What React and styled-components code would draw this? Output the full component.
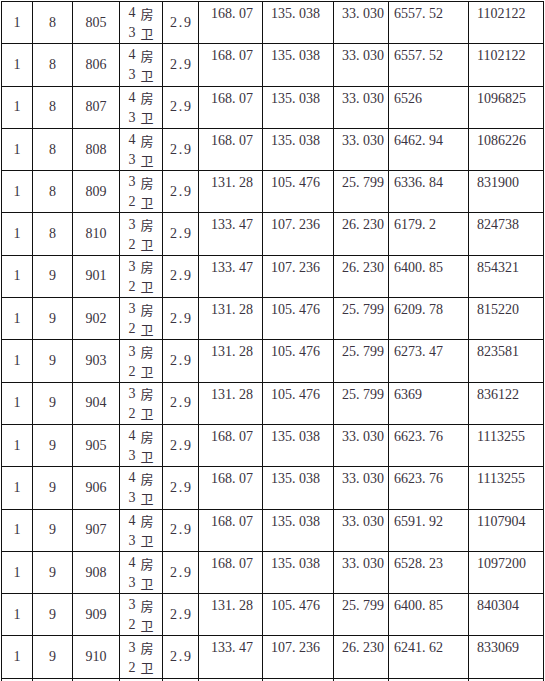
import React from 'react'
import styled, { createGlobalStyle } from 'styled-components';

const GlobalStyle = createGlobalStyle`
    html, body {
        margin: 0;
        padding: 0;
        background: #ffffff;
        overflow: hidden;
    }
    body {
        font-family: "Liberation Serif", "Noto Sans CJK SC", serif;
        font-size: 14px;
        color: #3a3340;
    }
`;

const Page = styled.div`
    padding: 1px 0 0 1px;
    height: 681px;
    overflow: hidden;
`;

const Table = styled.table`
    border-collapse: collapse;
    table-layout: fixed;
    width: 542px;
`;

const Row = styled.tr`
    height: 42.3px;
`;

const Cell = styled.td`
    border: 1px solid #111;
    padding: ${p => p.$top ? `2px 0 0 ${p.$pad || 0}px` : '0'};
    vertical-align: ${p => p.$top ? 'top' : 'middle'};
    text-align: ${p => p.$top ? 'left' : 'center'};
    line-height: 20px;
    white-space: nowrap;
    overflow: hidden;
`;

const Rooms = styled.div`
    display: flex;
    flex-direction: column;
    align-items: center;
    height: 41px;
    padding-top: 1px;
    box-sizing: border-box;
`;

const RoomLine = styled.div`
    height: 20px;
    line-height: 20px;
    display: flex;
    align-items: center;
`;

const Han = styled.span`
    font-family: "Noto Sans CJK SC", sans-serif;
    font-size: 13px;
    line-height: 1;
    margin-left: 5px;
`;

const Dot = styled.span`
    display: inline-block;
    width: 7px;
`;

const widths = [31, 40, 47, 43, 36, 64, 71, 55, 80, 75];
const pads = [12, 8, 8, 5, 8];

const rows = [
    [1, 8, 805, 4, 3, '168.07', '135.038', '33.030', '6557.52', '1102122'],
    [1, 8, 806, 4, 3, '168.07', '135.038', '33.030', '6557.52', '1102122'],
    [1, 8, 807, 4, 3, '168.07', '135.038', '33.030', '6526', '1096825'],
    [1, 8, 808, 4, 3, '168.07', '135.038', '33.030', '6462.94', '1086226'],
    [1, 8, 809, 3, 2, '131.28', '105.476', '25.799', '6336.84', '831900'],
    [1, 8, 810, 3, 2, '133.47', '107.236', '26.230', '6179.2', '824738'],
    [1, 9, 901, 3, 2, '133.47', '107.236', '26.230', '6400.85', '854321'],
    [1, 9, 902, 3, 2, '131.28', '105.476', '25.799', '6209.78', '815220'],
    [1, 9, 903, 3, 2, '131.28', '105.476', '25.799', '6273.47', '823581'],
    [1, 9, 904, 3, 2, '131.28', '105.476', '25.799', '6369', '836122'],
    [1, 9, 905, 4, 3, '168.07', '135.038', '33.030', '6623.76', '1113255'],
    [1, 9, 906, 4, 3, '168.07', '135.038', '33.030', '6623.76', '1113255'],
    [1, 9, 907, 4, 3, '168.07', '135.038', '33.030', '6591.92', '1107904'],
    [1, 9, 908, 4, 3, '168.07', '135.038', '33.030', '6528.23', '1097200'],
    [1, 9, 909, 3, 2, '131.28', '105.476', '25.799', '6400.85', '840304'],
    [1, 9, 910, 3, 2, '133.47', '107.236', '26.230', '6241.62', '833069'],
];

// SimSun style half-width period
const Num = ({ v }) => {
    const parts = String(v).split('.');
    if (parts.length < 2) return <>{v}</>;
    return <>{parts[0]}<Dot>.</Dot>{parts[1]}</>;
};

function App() {
    return (
        <Page>
            <GlobalStyle />
            <Table>
                <colgroup>
                    {widths.map((w, i) => <col key={i} style={{ width: w }} />)}
                </colgroup>
                <tbody>
                    {rows.map((r, i) => (
                        <Row key={i}>
                            <Cell>{r[0]}</Cell>
                            <Cell>{r[1]}</Cell>
                            <Cell>{r[2]}</Cell>
                            <Cell>
                                <Rooms>
                                    <RoomLine><span>{r[3]}</span><Han>房</Han></RoomLine>
                                    <RoomLine><span>{r[4]}</span><Han>卫</Han></RoomLine>
                                </Rooms>
                            </Cell>
                            <Cell><Num v="2.9" /></Cell>
                            {r.slice(5).map((v, j) => (
                                <Cell key={j} $top $pad={pads[j]}><Num v={v} /></Cell>
                            ))}
                        </Row>
                    ))}
                    <Row>
                        {widths.map((w, i) => <Cell key={i} />)}
                    </Row>
                </tbody>
            </Table>
        </Page>
    );
}

export default App;
